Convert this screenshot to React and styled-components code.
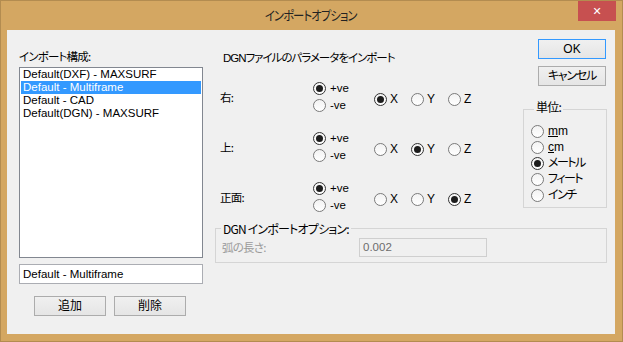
import React from 'react';
import styled, { createGlobalStyle } from 'styled-components';

const Global = createGlobalStyle`
  html, body { margin: 0; padding: 0; background: #d4a762; }
  body { width: 623px; height: 342px; overflow: hidden; }
  * { box-sizing: border-box; }
`;

const FONT = `"Liberation Sans", "Noto Sans CJK JP", sans-serif`;

const Window = styled.div`
  width: 623px;
  height: 342px;
  background: #d4a762;
  border: 1px solid #b38c50;
  padding: 0 7px 7px 6px;
  display: flex;
  flex-direction: column;
  font-family: ${FONT};
  font-feature-settings: "palt";
  color: #000;
`;

const TitleBar = styled.div`
  height: 29px;
  flex: none;
  display: grid;
  grid-template-columns: 1fr auto 1fr;
`;

const Title = styled.div`
  grid-column: 2;
  align-self: center;
  font-family: "Noto Sans CJK JP", sans-serif;
  font-size: 13px;
  line-height: 16px;
  margin-top: -1px;
  color: #222;
  letter-spacing: -1px;
  transform: scaleX(0.87);
`;

const CloseButton = styled.div`
  grid-column: 3;
  justify-self: end;
  align-self: start;
  width: 38px;
  height: 20px;
  margin-right: -1px;
  background: #c75050;
  color: #fff;
  display: flex;
  align-items: center;
  justify-content: center;
  font-family: "DejaVu Sans", sans-serif;
  font-size: 11px;
  font-weight: bold;
`;

const Client = styled.div`
  flex: 1;
  background: #f0f0f0;
  display: flex;
  gap: 12px;
  padding: 9px 8px 0 12px;
  font-size: 12px;
  line-height: 13px;
`;

const LeftColumn = styled.div`
  width: 184px;
  flex: none;
  display: flex;
  flex-direction: column;
`;

const Label = styled.div`
  font-family: "Noto Sans CJK JP", sans-serif;
  font-size: 11.5px;
  letter-spacing: -0.8px;
  line-height: 13px;
  margin-top: ${p => p.$mt || 0}px;
  margin-bottom: ${p => p.$mb || 0}px;
  color: ${p => (p.$disabled ? '#9a9a9a' : '#000')};
  width: ${p => (p.$w ? `${p.$w}px` : 'auto')};
  flex: none;
`;

const ListBox = styled.div`
  height: 191px;
  border: 1px solid #828790;
  background: #fff;
  padding: 0 1px;
  display: flex;
  flex-direction: column;
`;

const ListRow = styled.div`
  height: 13px;
  line-height: 13px;
  padding-left: 2px;
  font-size: 11.5px;
  white-space: nowrap;
  background: ${p => (p.$selected ? '#3399ff' : 'transparent')};
  color: ${p => (p.$selected ? '#fff' : '#000')};
`;

const TextBox = styled.div`
  height: ${p => p.$h || 20}px;
  width: ${p => (p.$w ? `${p.$w}px` : 'auto')};
  margin-top: ${p => p.$mt || 0}px;
  border: 1px solid ${p => (p.$disabled ? '#cfcfcf' : '#abadb3')};
  background: ${p => (p.$disabled ? '#f0f0f0' : '#fff')};
  color: ${p => (p.$disabled ? '#6d6d6d' : '#000')};
  font-size: 11.5px;
  padding-left: 3px;
  display: flex;
  align-items: center;
  white-space: nowrap;
`;

const ButtonRow = styled.div`
  display: flex;
  gap: 8px;
  margin-top: 12px;
  padding-left: 15px;
`;

const Button = styled.div`
  width: ${p => p.$w || 72}px;
  height: 20px;
  flex: none;
  border: 1px solid ${p => (p.$default ? '#3399ff' : '#acacac')};
  background: linear-gradient(#f0f0f0, #e5e5e5);
  display: flex;
  align-items: center;
  justify-content: center;
  font-family: "Liberation Sans", "Noto Sans CJK JP", sans-serif;
  font-size: 12px;
  letter-spacing: ${p => p.$ls ?? 0}px;
  align-self: ${p => p.$align || 'auto'};
  margin-top: ${p => p.$mt || 0}px;
  margin-right: ${p => p.$mr || 0}px;
`;

const RightRegion = styled.div`
  flex: 1;
  display: flex;
  flex-direction: column;
`;

const TopPart = styled.div`
  display: flex;
`;

const AxesBlock = styled.div`
  flex: 1;
  display: flex;
  flex-direction: column;
`;

const Heading = styled.div`
  font-family: "Liberation Sans", "Noto Sans CJK JP", sans-serif;
  font-size: 11.5px;
  letter-spacing: -1px;
  line-height: 14px;
  margin: 12px 0 7px 8px;
`;

const AxisRow = styled.div`
  display: grid;
  grid-template-columns: 93px 61px auto;
  align-items: center;
  height: 50px;
  padding-left: 5px;
`;

const SignGroup = styled.div`
  display: flex;
  flex-direction: column;
`;

const AxisGroup = styled.div`
  display: flex;
  padding-top: 4px;
`;

const RadioItem = styled.div`
  display: flex;
  align-items: center;
  gap: ${p => p.$gap ?? 4}px;
  height: ${p => p.$h || 17}px;
  width: ${p => (p.$w ? `${p.$w}px` : 'auto')};
  font-size: ${p => p.$fs || 12}px;
  letter-spacing: ${p => p.$ls ?? 0}px;
  white-space: nowrap;
`;

const RadioCircle = styled.span`
  width: 13px;
  height: 13px;
  flex: none;
  border-radius: 50%;
  border: 1px solid ${p => (p.$on ? '#333' : '#7a7a7a')};
  background: linear-gradient(#f3f3f3, #ffffff);
  display: flex;
  align-items: center;
  justify-content: center;
  &::after {
    content: '';
    width: 7px;
    height: 7px;
    border-radius: 50%;
    background: #1c1c1c;
    display: ${p => (p.$on ? 'block' : 'none')};
  }
`;

const RightColumn = styled.div`
  width: 84px;
  flex: none;
  display: flex;
  flex-direction: column;
`;

const GroupBox = styled.fieldset`
  margin: ${p => p.$mt || 0}px 0 0 0;
  padding: ${p => p.$pad};
  border: 1px solid #d5d5d5;
  min-inline-size: 0;
  display: flex;
  flex-direction: column;
`;

const Legend = styled.legend`
  font-family: "Noto Sans CJK JP", sans-serif;
  font-size: 12px;
  letter-spacing: -0.8px;
  line-height: 13px;
  padding: 0 2px ${p => p.$pb || 0}px 2px;
  margin-left: ${p => p.$ml || 0}px;
  font-weight: 400;
  color: #000;
`;

const OptionRow = styled.div`
  display: flex;
  align-items: center;
  padding-left: 6px;
`;

const U = styled.span`
  text-decoration: underline;
`;

function Radio({ on, children, ...rest }) {
  return (
    <RadioItem {...rest}>
      <RadioCircle $on={on} />
      <span>{children}</span>
    </RadioItem>
  );
}

const configs = [
  'Default(DXF) - MAXSURF',
  'Default - Multiframe',
  'Default - CAD',
  'Default(DGN) - MAXSURF',
];

const axes = [
  { label: '右:', sign: 0, axis: 0 },
  { label: '上:', sign: 0, axis: 1 },
  { label: '正面:', sign: 0, axis: 2 },
];

const units = [
  { key: 'mm', node: <><U>m</U>m</>, ls: 0 },
  { key: 'cm', node: <><U>c</U>m</>, ls: 0 },
  { key: 'm', node: 'メートル', ls: -1.5 },
  { key: 'ft', node: 'フィート', ls: -1.5 },
  { key: 'in', node: 'インチ', ls: -1.5 },
];

export default function App() {
  return (
    <>
      <Global />
      <Window>
        <TitleBar>
          <Title>インポートオプション</Title>
          <CloseButton>✕</CloseButton>
        </TitleBar>
        <Client>
          <LeftColumn>
            <Label $mt={11} $mb={4}>インポート構成:</Label>
            <ListBox>
              {configs.map((c, i) => (
                <ListRow key={c} $selected={i === 1}>{c}</ListRow>
              ))}
            </ListBox>
            <TextBox $mt={6}>Default - Multiframe</TextBox>
            <ButtonRow>
              <Button>追加</Button>
              <Button>削除</Button>
            </ButtonRow>
          </LeftColumn>
          <RightRegion>
            <TopPart>
              <AxesBlock>
                <Heading>DGNファイルのパラメータをインポート</Heading>
                {axes.map(a => (
                  <AxisRow key={a.label}>
                    <Label>{a.label}</Label>
                    <SignGroup>
                      <Radio on={a.sign === 0} $fs={11.5}>+ve</Radio>
                      <Radio on={a.sign === 1} $fs={11.5}>-ve</Radio>
                    </SignGroup>
                    <AxisGroup>
                      {['X', 'Y', 'Z'].map((x, i) => (
                        <Radio key={x} on={a.axis === i} $w={37} $gap={3}>{x}</Radio>
                      ))}
                    </AxisGroup>
                  </AxisRow>
                ))}
              </AxesBlock>
              <RightColumn>
                <Button $w={68} $align="flex-end" $mr={1} $default>OK</Button>
                <Button $w={68} $align="flex-end" $mr={1} $mt={7} $ls={-1.2}>キャンセル</Button>
                <GroupBox $mt={14} $pad="4px 0 4px 7px">
                  <Legend $pb={6} $ml={3}>単位:</Legend>
                  {units.map((u, i) => (
                    <Radio key={u.key} on={i === 2} $h={16} $gap={4} $ls={u.ls}>{u.node}</Radio>
                  ))}
                </GroupBox>
              </RightColumn>
            </TopPart>
            <GroupBox $pad="3px 0 5px 0">
              <Legend $ml={5}>DGN インポートオプション:</Legend>
              <OptionRow>
                <Label $w={137} $disabled>弧の長さ:</Label>
                <TextBox $w={128} $h={19} $disabled>0.002</TextBox>
              </OptionRow>
            </GroupBox>
          </RightRegion>
        </Client>
      </Window>
    </>
  );
}
